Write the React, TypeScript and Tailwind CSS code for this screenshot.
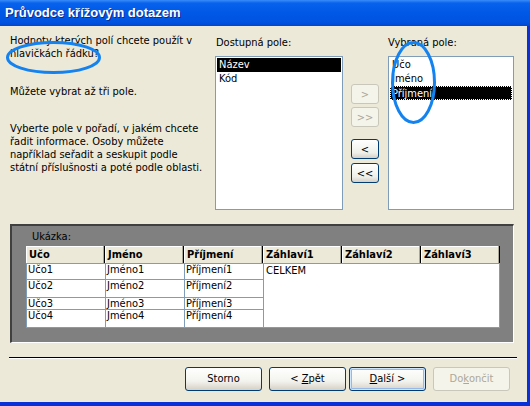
const font = "font-['DejaVu_Sans_Condensed','Liberation_Sans',sans-serif]"

function SmallBtn({ label, disabled }: { label: string; disabled?: boolean }) {
  return (
    <div
      className={
        'w-[28px] h-[20px] rounded-[3px] border flex items-center justify-center text-[11px] leading-none ' +
        (disabled
          ? 'border-[#C9C7BA] bg-[#F5F4EA] text-[#ACA899]'
          : 'border-[#003C74] bg-[linear-gradient(to_bottom,#FFFFFF,#F0F0EA_70%,#D6D0C5)] text-black')
      }
    >
      {label}
    </div>
  )
}

function Btn({ children, variant, className = '' }: { children: React.ReactNode; variant?: 'default' | 'disabled'; className?: string }) {
  let cls = 'border-[#003C74] bg-[linear-gradient(to_bottom,#FFFFFF,#F3F3EE_60%,#D6D0C5)] text-black'
  if (variant === 'default')
    cls = 'border-[#003C74] bg-[linear-gradient(to_bottom,#FFFFFF,#F3F3EE_60%,#D6D0C5)] text-black shadow-[inset_0_0_0_1px_#CEE7FF,inset_0_0_0_2px_#98B8EA]'
  if (variant === 'disabled') cls = 'border-[#C9C7BA] bg-[#F5F4EA] text-[#ACA899]'
  return (
    <div className={'w-[77px] h-[24px] rounded-[3px] border flex items-center justify-center text-[11px] ' + cls + ' ' + className}>
      {children}
    </div>
  )
}

const headers = ['Učo', 'Jméno', 'Příjmení', 'Záhlaví1', 'Záhlaví2', 'Záhlaví3']
const rows = [
  { h: 'h-[16px]', v: ['Učo1', 'Jméno1', 'Příjmení1'] },
  { h: 'h-[18px]', v: ['Učo2', 'Jméno2', 'Příjmení2'] },
  { h: 'h-[12px]', v: ['Učo3', 'Jméno3', 'Příjmení3'] },
  { h: 'h-[18px]', v: ['Učo4', 'Jméno4', 'Příjmení4'] },
]

export default function App() {
  return (
    <div className={'relative w-[530px] h-[406px] overflow-hidden bg-[#ECE9D8] text-black flex flex-col ' + font}>
      {/* titulek */}
      <div className="h-[26px] shrink-0 flex items-center pl-[5px] bg-[linear-gradient(to_bottom,#3A8CF8,#0862EC_12%,#0058E6_50%,#0053E0_85%,#0047D0)]">
        <span className="text-white font-bold text-[13px] font-['Liberation_Sans',sans-serif] [text-shadow:1px_1px_#0A2C8C]">
          Průvodce křížovým dotazem
        </span>
      </div>

      <div className="flex-1 flex flex-col border-r-[3px] border-b-[4px] border-[#0831D9]">
        <div className="h-[184px] flex items-start text-[11px] leading-[13px]">
          <div className="w-[215px] pl-[10px] pr-[10px] pt-[8px]">
            <p>Hodnoty kterých polí chcete použít v hlavičkách řádku?</p>
            <p className="mt-[25px]">Můžete vybrat až tři pole.</p>
            <p className="mt-[24px]">
              Vyberte pole v pořadí, v jakém chcete řadit informace. Osoby můžete například seřadit a seskupit podle státní příslušnosti a poté podle oblasti.
            </p>
          </div>

          <div className="w-[128px] pt-[10px]">
            <div className="h-[20px] pl-px">Dostupná pole:</div>
            <div className="h-[154px] bg-white border border-[#7F9DB9] p-px">
              <div className="h-[14px] bg-black text-white pl-[2px]">Název</div>
              <div className="h-[14px] pl-[2px]">Kód</div>
            </div>
          </div>

          <div className="ml-[8px] pt-[58px] flex flex-col">
            <SmallBtn label=">" disabled />
            <div className="mt-[3px]"><SmallBtn label=">>" disabled /></div>
            <div className="mt-[12px]"><SmallBtn label="<" /></div>
            <div className="mt-[4px]"><SmallBtn label="<<" /></div>
          </div>

          <div className="ml-[9px] w-[126px] pt-[10px]">
            <div className="h-[20px]">Vybraná pole:</div>
            <div className="h-[154px] bg-white border border-[#7F9DB9] p-px">
              <div className="h-[14px] pl-[2px]">Učo</div>
              <div className="h-[14px] pl-[2px]">Jméno</div>
              <div className="h-[14px] bg-black text-white pl-[1px] border border-dotted border-white">Příjmení</div>
            </div>
          </div>
        </div>

        {/* ukázka */}
        <div className="mt-[14px] ml-[10px] w-[504px] h-[119px] bg-[#808080] border-t-2 border-l-2 border-t-[#404040] border-l-[#404040] border-b border-r border-b-white border-r-white text-[11px]">
          <div className="pl-[20px] pt-[4px] h-[20px] leading-[13px]">Ukázka:</div>
          <div className="ml-[14px] w-[474px]">
            <div className="flex h-[17px]">
              {headers.map((h) => (
                <div key={h} className="w-[79px] bg-[#ECE9D8] font-bold pl-[3px] leading-[17px] border-r border-black shadow-[inset_-1px_0_#ACA899,inset_1px_1px_#FFFFFF]">
                  {h}
                </div>
              ))}
            </div>
            <div className="flex border-l border-t border-[#7F9DB9] bg-white">
              <div className="flex flex-col">
                {rows.map((r, i) => (
                  <div key={i} className={'flex ' + r.h}>
                    {r.v.map((c) => (
                      <div key={c} className="w-[79px] border-r border-b border-[#7F9DB9] pl-px leading-[12px] overflow-hidden">
                        {c}
                      </div>
                    ))}
                  </div>
                ))}
              </div>
              <div className="w-[236px] border-r border-b border-[#7F9DB9] pl-[2px] leading-[13px]">CELKEM</div>
            </div>
          </div>
        </div>

        <div className="mt-[14px] ml-[9px] w-[508px] h-px bg-black" />
        <div className="ml-[9px] w-[508px] h-px bg-white" />

        <div className="mt-[8px] flex text-[11px]">
          <Btn className="ml-[185px]">Storno</Btn>
          <Btn className="ml-[7px]">&lt; <span className="underline ml-[3px]">Z</span>pět</Btn>
          <Btn className="ml-[3px]" variant="default"><span className="underline">D</span>alší &gt;</Btn>
          <Btn className="ml-[7px]" variant="disabled">Do<span className="underline">k</span>ončit</Btn>
        </div>
      </div>

      {/* modré zvýraznění */}
      <svg className="absolute left-0 top-0 pointer-events-none" width="530" height="406">
        <ellipse cx="53.5" cy="57.5" rx="46" ry="15" fill="none" stroke="#1483F0" strokeWidth="3" />
        <ellipse cx="413.5" cy="82.5" rx="21" ry="40" fill="none" stroke="#1483F0" strokeWidth="3" />
      </svg>
    </div>
  )
}
